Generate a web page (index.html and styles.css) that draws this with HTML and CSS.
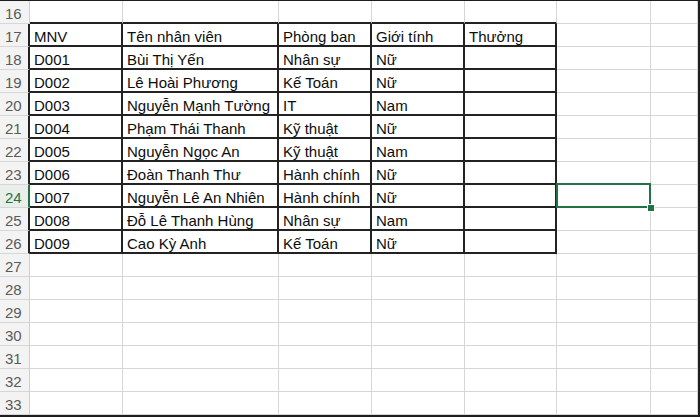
FILE: index.html
```html
<!DOCTYPE html>
<html lang="vi">
<head>
<meta charset="utf-8">
<link rel="stylesheet" href="styles.css">
</head>
<body>
<div class="frame">
  <div class="sheet">
    <div class="c h">16</div><div class="c tb"></div><div class="c tb"></div><div class="c tb"></div><div class="c tb"></div><div class="c tb"></div><div class="c"></div><div class="c"></div>

    <div class="c h hb">17</div><div class="c t">MNV</div><div class="c t">Tên nhân viên</div><div class="c t">Phòng ban</div><div class="c t">Giới tính</div><div class="c t">Thưởng</div><div class="c"></div><div class="c"></div>
    <div class="c h hb">18</div><div class="c t">D001</div><div class="c t">Bùi Thị Yến</div><div class="c t">Nhân sự</div><div class="c t">Nữ</div><div class="c t"></div><div class="c"></div><div class="c"></div>
    <div class="c h hb">19</div><div class="c t">D002</div><div class="c t">Lê Hoài Phương</div><div class="c t">Kế Toán</div><div class="c t">Nữ</div><div class="c t"></div><div class="c"></div><div class="c"></div>
    <div class="c h hb">20</div><div class="c t">D003</div><div class="c t">Nguyễn Mạnh Tường</div><div class="c t">IT</div><div class="c t">Nam</div><div class="c t"></div><div class="c"></div><div class="c"></div>
    <div class="c h hb">21</div><div class="c t">D004</div><div class="c t">Phạm Thái Thanh</div><div class="c t">Kỹ thuật</div><div class="c t">Nữ</div><div class="c t"></div><div class="c"></div><div class="c"></div>
    <div class="c h hb">22</div><div class="c t">D005</div><div class="c t">Nguyễn Ngọc An</div><div class="c t">Kỹ thuật</div><div class="c t">Nam</div><div class="c t"></div><div class="c"></div><div class="c"></div>
    <div class="c h hb">23</div><div class="c t">D006</div><div class="c t">Đoàn Thanh Thư</div><div class="c t">Hành chính</div><div class="c t">Nữ</div><div class="c t"></div><div class="c"></div><div class="c"></div>
    <div class="c h hb active">24</div><div class="c t">D007</div><div class="c t">Nguyễn Lê An Nhiên</div><div class="c t">Hành chính</div><div class="c t">Nữ</div><div class="c t"></div><div class="c selected"><span class="handle"></span></div><div class="c"></div>
    <div class="c h hb">25</div><div class="c t">D008</div><div class="c t">Đỗ Lê Thanh Hùng</div><div class="c t">Nhân sự</div><div class="c t">Nam</div><div class="c t"></div><div class="c"></div><div class="c"></div>
    <div class="c h hb">26</div><div class="c t">D009</div><div class="c t">Cao Kỳ Anh</div><div class="c t">Kế Toán</div><div class="c t">Nữ</div><div class="c t"></div><div class="c"></div><div class="c"></div>

    <div class="c h">27</div><div class="c"></div><div class="c"></div><div class="c"></div><div class="c"></div><div class="c"></div><div class="c"></div><div class="c"></div>
    <div class="c h">28</div><div class="c"></div><div class="c"></div><div class="c"></div><div class="c"></div><div class="c"></div><div class="c"></div><div class="c"></div>
    <div class="c h">29</div><div class="c"></div><div class="c"></div><div class="c"></div><div class="c"></div><div class="c"></div><div class="c"></div><div class="c"></div>
    <div class="c h">30</div><div class="c"></div><div class="c"></div><div class="c"></div><div class="c"></div><div class="c"></div><div class="c"></div><div class="c"></div>
    <div class="c h">31</div><div class="c"></div><div class="c"></div><div class="c"></div><div class="c"></div><div class="c"></div><div class="c"></div><div class="c"></div>
    <div class="c h">32</div><div class="c"></div><div class="c"></div><div class="c"></div><div class="c"></div><div class="c"></div><div class="c"></div><div class="c"></div>
    <div class="c h">33</div><div class="c"></div><div class="c"></div><div class="c"></div><div class="c"></div><div class="c"></div><div class="c"></div><div class="c"></div>
  </div>
</div>
</body>
</html>
```

FILE: styles.css
```css
html, body {
  margin: 0;
  padding: 0;
  background: #ffffff;
}

.frame {
  box-sizing: border-box;
  width: 700px;
  height: 417px;
  border-top: 1px solid #1e1e1e;
  border-right: 2px solid #1e1e1e;
  border-bottom: 2px solid #1e1e1e;
  overflow: hidden;
  background: #ffffff;
}

.sheet {
  display: grid;
  grid-template-columns: 30px 93px 156px 93px 93px 92px 94px 1fr;
  grid-auto-rows: 23px;
  font-family: "Liberation Sans", Arial, sans-serif;
  font-size: 15px;
  color: #0d0d0d;
}

.c {
  box-sizing: border-box;
  border-right: 1px solid #d6d6d6;
  border-bottom: 1px solid #d6d6d6;
  display: flex;
  align-items: flex-end;
  padding: 0 0 0 4px;
  line-height: 16px;
  white-space: nowrap;
  position: relative;
}

.h {
  background: #f3f3f3;
  color: #5a5a5a;
  padding-left: 5px;
  padding-bottom: 1px;
  border-right-color: #cfcfcf;
}

.hb {
  border-right: 2px solid #222222;
}

.h.active {
  color: #217346;
  background: #e9eeeb;
  border-right: 2px solid #217346;
}

.tb {
  border-bottom: 2px solid #222222;
}

.t {
  border-right: 2px solid #222222;
  border-bottom: 2px solid #222222;
}

.selected::after {
  content: "";
  position: absolute;
  left: -1px;
  top: -2px;
  right: -1px;
  bottom: -1px;
  border: 2px solid #217346;
  pointer-events: none;
}

.handle {
  position: absolute;
  right: -5px;
  bottom: -5px;
  width: 6px;
  height: 6px;
  background: #217346;
  border: 1px solid #ffffff;
  z-index: 2;
}
```
